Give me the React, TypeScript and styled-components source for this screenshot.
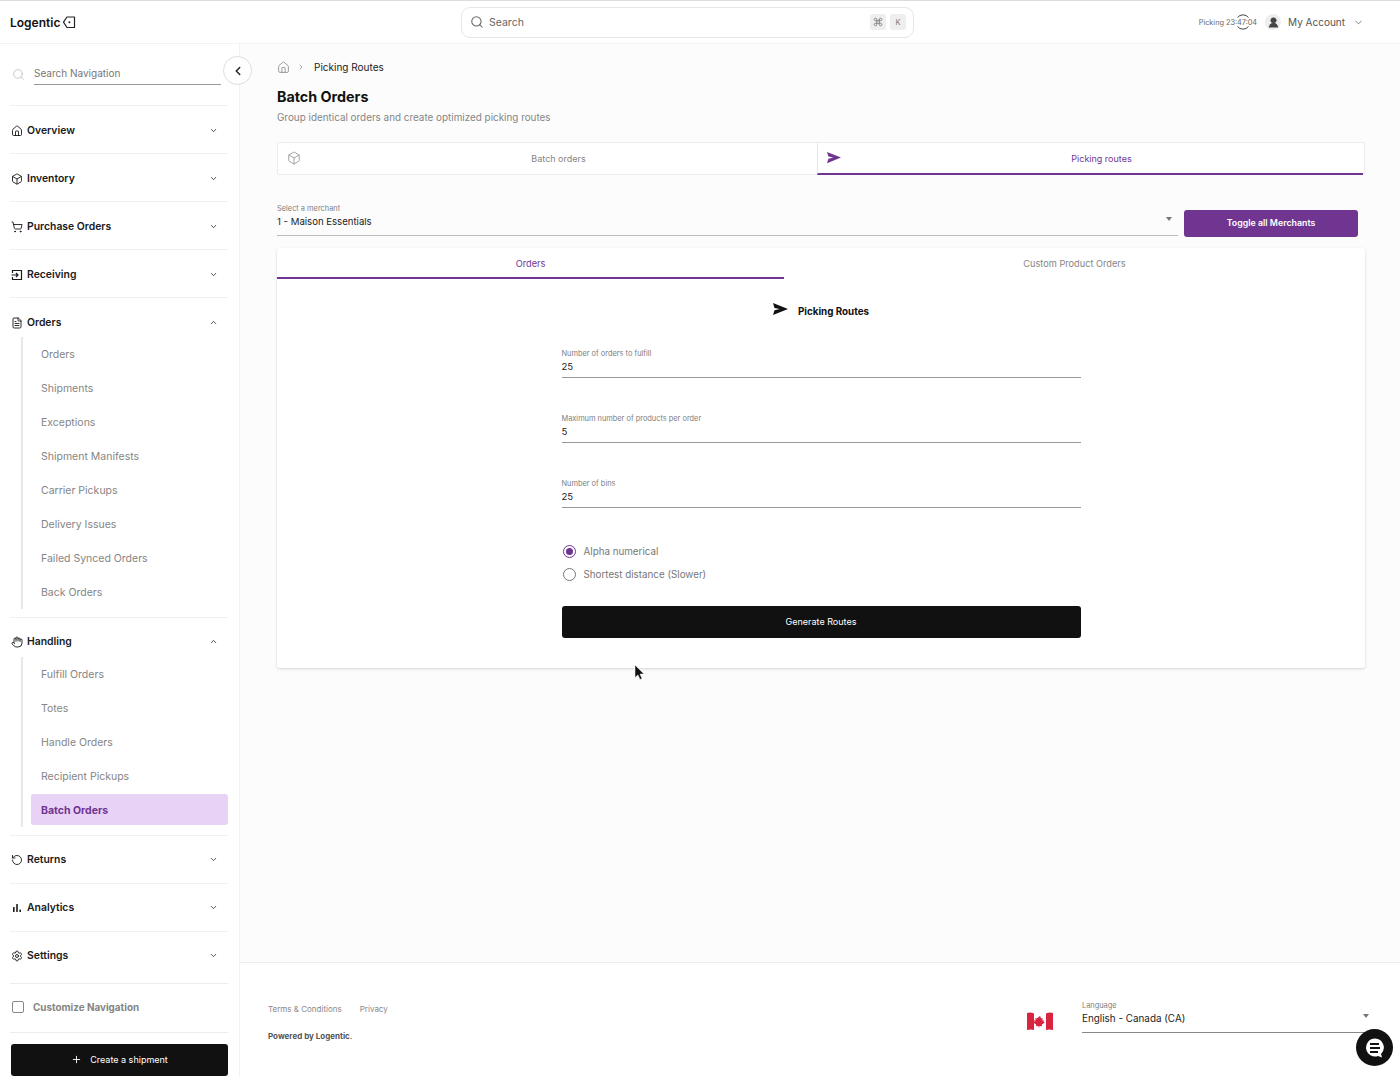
import React from "react";
import styled, { createGlobalStyle } from "styled-components";
import {
  Box,
  ChevronDown,
  ChevronLeft,
  ChevronRight,
  ChevronUp,
  Command,
  FileText,
  Hand,
  Home,
  Plus,
  RotateCcw,
  Search,
  Settings,
  ShoppingCart,
  UserRound,
} from "lucide-react";

const purple = "#6f3590";
const font = `"Inter", "Liberation Sans", sans-serif`;

const GlobalStyle = createGlobalStyle`
  html, body { margin: 0; padding: 0; background: #fcfcfc; }
  * { box-sizing: border-box; }
  body { font-family: ${font}; color: #111; -webkit-font-smoothing: antialiased; }
`;

const Page = styled.div`
  position: relative;
  display: flex;
  flex-direction: column;
  width: 1400px;
  height: 1077px;
  overflow: hidden;
  border-top: 1px solid #dcdcdc;
`;

const Header = styled.header`
  display: grid;
  grid-template-columns: 461px 453px 1fr;
  height: 43px;
  flex: none;
  background: #fff;
  border-bottom: 1px solid #f2f2f2;
`;

const Logo = styled.div`
  display: flex;
  align-items: center;
  gap: 2px;
  padding-left: 10px;
  font-size: 12px;
  font-weight: 600;
`;

const TopSearch = styled.div`
  display: flex;
  align-items: center;
  gap: 5px;
  height: 31px;
  margin-top: 6px;
  padding: 0 7px 1px 8px;
  border: 1px solid #e6e6e6;
  border-radius: 9px;
  color: #666;
  font-size: 10.5px;
`;

const TopSearchText = styled.span`
  flex: 1;
`;

const Kbd = styled.span`
  display: flex;
  align-items: center;
  justify-content: center;
  width: 16px;
  height: 16px;
  margin-left: -1px;
  border-radius: 3px;
  background: #eee;
  color: #777;
  font-size: 7.5px;
`;

const TopRight = styled.div`
  display: flex;
  align-items: center;
  justify-content: flex-end;
  padding-right: 36px;
  color: #555;
`;

const Timer = styled.span`
  position: relative;
  font-size: 7.3px;
  color: #666;
  margin-right: 8px;
`;

const TimerArcs = styled.svg`
  position: absolute;
  top: -5px;
  right: 6px;
  width: 16px;
  height: 18px;
`;

const Avatar = styled.span`
  display: flex;
  align-items: center;
  justify-content: center;
  width: 16px;
  height: 16px;
  border-radius: 50%;
  background: #eee;
  color: #444;
  margin-right: 7px;
`;

const Account = styled.span`
  font-size: 10px;
  margin-right: 8px;
`;

const Body = styled.div`
  display: flex;
  flex: 1;
  min-height: 0;
`;

const Sidebar = styled.aside`
  position: relative;
  display: flex;
  flex-direction: column;
  flex: none;
  width: 240px;
  padding: 0 11px 0 10px;
  background: #fff;
  border-right: 1px solid #f2f2f2;
`;

const NavSearch = styled.div`
  display: flex;
  align-items: center;
  gap: 9px;
  height: 61px;
  padding: 0 7px 0 2px;
  color: #bbb;
`;

const NavSearchText = styled.div`
  flex: 1;
  height: 21px;
  padding-top: 3px;
  border-bottom: 1px solid #999;
  color: #777;
  font-size: 10px;
`;

const Collapse = styled.button`
  position: absolute;
  top: 12px;
  left: 223px;
  display: flex;
  align-items: center;
  justify-content: center;
  width: 29px;
  height: 29px;
  padding: 0;
  border: 1px solid #ddd;
  border-radius: 50%;
  background: #fff;
  color: #222;
`;

const Section = styled.section`
  border-top: 1px solid #f0f0f0;
`;

const SectionHead = styled.div<{ $raised?: boolean }>`
  display: flex;
  align-items: center;
  gap: 4px;
  height: 47px;
  padding: ${(p) => (p.$raised ? "0" : "2px")} 10px 0 1px;
  font-size: 10.4px;
  font-weight: 600;
  color: #1a1a1a;
`;

const SectionTitle = styled.span`
  flex: 1;
`;

const SubList = styled.div`
  display: flex;
  flex-direction: column;
  margin: -8px 0 8px 11px;
  padding-left: 8px;
  border-left: 2px solid #e8e8e8;
`;

const SubItem = styled.div<{ $active?: boolean }>`
  display: flex;
  align-items: center;
  height: ${(p) => (p.$active ? "31px" : "34px")};
  margin-top: ${(p) => (p.$active ? "1px" : "0")};
  margin-bottom: ${(p) => (p.$active ? "2px" : "0")};
  padding: ${(p) => (p.$active ? "1px" : "0")} 0 0 10px;
  border-radius: 3px;
  background: ${(p) => (p.$active ? "#e8d2f5" : "transparent")};
  color: ${(p) => (p.$active ? purple : "#858585")};
  font-size: 10.5px;
  font-weight: ${(p) => (p.$active ? 700 : 400)};
`;

const Customize = styled.div`
  display: flex;
  align-items: center;
  gap: 9px;
  height: 50px;
  margin-top: 4px;
  padding: 0 0 2px 2px;
  border-top: 1px solid #ececec;
  border-bottom: 1px solid #ececec;
  color: #858585;
  font-size: 9.9px;
  font-weight: 700;
`;

const CheckBoxMark = styled.span`
  width: 12px;
  height: 12px;
  border: 1.5px solid #888;
  border-radius: 2px;
`;

const ShipButton = styled.button`
  display: flex;
  align-items: center;
  justify-content: center;
  gap: 8px;
  width: 217px;
  height: 32px;
  margin: 11px 0 0 1px;
  padding-bottom: 2px;
  border: 0;
  border-radius: 3px;
  background: #111;
  color: #fff;
  font-family: inherit;
  font-size: 9px;
`;

const Main = styled.main`
  display: flex;
  flex-direction: column;
  flex: 1;
  min-width: 0;
`;

const Content = styled.div`
  flex: 1;
  padding: 15px 35px 0 37px;
  background: #fcfcfc;
`;

const Crumbs = styled.div`
  display: flex;
  align-items: center;
  gap: 7px;
  height: 16px;
  color: #777;
  font-size: 10px;
`;

const CrumbCurrent = styled.span`
  margin-left: 2px;
  color: #222;
`;

const Title = styled.h1`
  margin: 12px 0 0;
  font-size: 14.3px;
  line-height: 20px;
  font-weight: 700;
`;

const Subtitle = styled.p`
  margin: 3px 0 0;
  color: #858585;
  font-size: 9.9px;
  line-height: 15px;
`;

const TopTabs = styled.div`
  display: flex;
  height: 33px;
  margin-top: 17px;
  background: #fff;
  border: 1px solid #ececec;
  border-radius: 2px;
`;

const TopTab = styled.div<{ $active?: boolean; $width: string }>`
  position: relative;
  display: flex;
  align-items: center;
  justify-content: center;
  width: ${(p) => p.$width};
  height: 32px;
  padding-left: 22px;
  color: ${(p) => (p.$active ? purple : "#858585")};
  font-size: 9px;
  border-left: ${(p) => (p.$active ? "1px solid #e6e6e6" : "0")};
  border-bottom: 2px solid ${(p) => (p.$active ? purple : "transparent")};
`;

const TabIcon = styled.span`
  position: absolute;
  top: 8px;
  left: 9px;
  display: flex;
  align-items: center;
  height: 14px;
  color: #888;
`;

const MerchantRow = styled.div`
  display: flex;
  align-items: flex-end;
  gap: 6px;
  margin-top: 29px;
  padding-right: 7px;
`;

const SelectField = styled.div`
  position: relative;
  flex: 1;
  padding-bottom: 7px;
  border-bottom: 1px solid #bbb;
`;

const FieldLabel = styled.div`
  color: #808080;
  font-size: 7.4px;
  line-height: 10px;
`;

const FieldValue = styled.div`
  margin-top: 1px;
  color: #222;
  font-size: 9.6px;
  line-height: 13px;
`;

const LanguageValue = styled(FieldValue)`
  font-size: 9.9px;
`;

const Caret = styled.span`
  position: absolute;
  top: 13px;
  right: 6px;
  border-left: 3.5px solid transparent;
  border-right: 3.5px solid transparent;
  border-top: 4px solid #777;
`;

const LanguageCaret = styled(Caret)`
  right: 1px;
`;

const PurpleButton = styled.button`
  width: 174px;
  height: 27px;
  margin-bottom: -1px;
  padding-bottom: 3px;
  border: 0;
  border-radius: 3px;
  background: ${purple};
  color: #fff;
  font-family: inherit;
  font-size: 8.8px;
  font-weight: 600;
`;

const Card = styled.div`
  height: 420px;
  margin-top: 12px;
  background: #fff;
  border-radius: 3px;
  box-shadow: 0 1px 3px rgba(0, 0, 0, 0.16);
`;

const InnerTabs = styled.div`
  display: flex;
  height: 31px;
`;

const InnerTab = styled.div<{ $active?: boolean; $width: string }>`
  display: flex;
  align-items: center;
  justify-content: center;
  width: ${(p) => p.$width};
  padding-top: 1px;
  color: ${(p) => (p.$active ? purple : "#858585")};
  font-size: 9.2px;
  border-bottom: 2px solid ${(p) => (p.$active ? purple : "transparent")};
`;

const Form = styled.div`
  display: flex;
  flex-direction: column;
  width: 519px;
  margin: 0 auto;
`;

const FormTitle = styled.div`
  display: flex;
  align-items: center;
  justify-content: center;
  gap: 10px;
  height: 18px;
  margin-top: 23px;
  font-size: 9.8px;
  font-weight: 700;
`;

const FormTitleIcon = styled.span`
  display: flex;
  margin-bottom: 4px;
`;

const Field = styled.div`
  height: 29px;
  margin-top: 36px;
  border-bottom: 1px solid #999;
  &:first-of-type {
    margin-top: 0;
  }
`;

const Fields = styled.div`
  display: flex;
  flex-direction: column;
  margin-top: 29px;
`;

const Radios = styled.div`
  display: flex;
  flex-direction: column;
  gap: 9px;
  margin-top: 36px;
  padding-left: 1px;
`;

const RadioRow = styled.label`
  display: flex;
  align-items: center;
  gap: 8px;
  height: 14px;
  color: #777;
  font-size: 9.8px;
`;

const RadioDot = styled.span<{ $on?: boolean }>`
  display: flex;
  align-items: center;
  justify-content: center;
  width: 13px;
  height: 13px;
  border: 1.5px solid ${(p) => (p.$on ? purple : "#777")};
  border-radius: 50%;
  &::after {
    content: "";
    display: ${(p) => (p.$on ? "block" : "none")};
    width: 7px;
    height: 7px;
    border-radius: 50%;
    background: ${purple};
  }
`;

const GenerateButton = styled.button`
  height: 32px;
  margin-top: 25px;
  padding-bottom: 3px;
  border: 0;
  border-radius: 3px;
  background: #111;
  color: #fff;
  font-family: inherit;
  font-size: 9px;
`;

const Footer = styled.footer`
  display: flex;
  justify-content: space-between;
  height: 115px;
  flex: none;
  padding: 40px 30px 0 28px;
  background: #fff;
  border-top: 1px solid #eee;
`;

const FooterLinks = styled.div`
  display: flex;
  gap: 18px;
  color: #888;
  font-size: 8px;
  line-height: 12px;
`;

const Powered = styled.div`
  margin-top: 15px;
  color: #555;
  font-size: 8px;
  line-height: 12px;
  font-weight: 700;
`;

const Language = styled.div`
  display: flex;
  gap: 29px;
  margin-top: -2px;
`;

const LanguageField = styled.div`
  position: relative;
  width: 288px;
  height: 32px;
  border-bottom: 1px solid #888;
`;

const FlagWrap = styled.div`
  padding-top: 11px;
`;

const ChatBubble = styled.div`
  position: absolute;
  right: 7px;
  bottom: 11px;
  display: flex;
  align-items: center;
  justify-content: center;
  width: 37px;
  height: 37px;
  border-radius: 50%;
  background: #111;
`;

const Cursor = styled.svg`
  position: absolute;
  left: 634px;
  top: 664px;
  width: 11px;
  height: 16px;
`;

const LogoTag = () => (
  <svg width="14" height="14" viewBox="0 0 14 14" fill="none" stroke="#222" strokeWidth="1.2">
    <path d="M5 2h7.500v10.500H5L1.500 7.200z" strokeLinejoin="round" />
    <circle cx="7.400" cy="7.200" r="1" fill="#222" stroke="none" />
  </svg>
);

const SendIcon = ({ color, size = 14 }: { color: string; size?: number }) => (
  <svg width={size} height={size * 0.8} viewBox="0 0 20 16" fill={color}>
    <path d="M0 0l20 8-20 8 2-6.500L9 8 2 6.500z" />
  </svg>
);

const ReceivingIcon = () => (
  <svg width="12" height="12" viewBox="0 0 12 12" fill="none" stroke="currentColor" strokeWidth="1.2">
    <path d="M1.500 4V1.500h9v9h-9V8" />
    <path d="M0.500 6h6.500M5 4l2 2-2 2" />
  </svg>
);

const AnalyticsIcon = () => (
  <svg width="12" height="12" viewBox="0 0 12 12" fill="currentColor">
    <rect x="2" y="5" width="1.600" height="5" rx="0.500" />
    <rect x="5.200" y="2" width="1.600" height="8" rx="0.500" />
    <rect x="8.400" y="7.500" width="1.600" height="2.500" rx="0.500" />
  </svg>
);

const Flag = () => (
  <svg width="26" height="19" viewBox="0 0 26 19">
    <path d="M0 1q3.500-1 7 .5V18q-3-1-7 0z" fill="#d9243f" />
    <path d="M7 1.500q6 1.500 12 0V18q-6 1.500-12 0z" fill="#fff" />
    <path d="M19 1.500Q22 0 26 1v17q-4-1-7 0z" fill="#d9243f" />
    <path d="M13 4l1.200 2.400 1.600-.5-.6 2.600 1.800-.3-.5 1.600 1.200.8-3 2.200.4 1.500-2.600-.4-.5 2.600-.5-2.600-2.600.4.4-1.500-3-2.200 1.200-.8-.5-1.600 1.800.3-.6-2.600 1.600.5z" fill="#d9243f" />
  </svg>
);

const sectionIcon = { size: 12, strokeWidth: 1.8 };

type NavSection = {
  title: string;
  icon: React.ReactNode;
  items?: string[];
  active?: string;
  raised?: boolean;
};

const sections: NavSection[] = [
  { title: "Overview", icon: <Home {...sectionIcon} /> },
  { title: "Inventory", icon: <Box {...sectionIcon} /> },
  { title: "Purchase Orders", icon: <ShoppingCart {...sectionIcon} /> },
  { title: "Receiving", icon: <ReceivingIcon /> },
  {
    title: "Orders",
    icon: <FileText {...sectionIcon} />,
    items: [
      "Orders",
      "Shipments",
      "Exceptions",
      "Shipment Manifests",
      "Carrier Pickups",
      "Delivery Issues",
      "Failed Synced Orders",
      "Back Orders",
    ],
  },
  {
    title: "Handling",
    icon: <Hand {...sectionIcon} />,
    items: ["Fulfill Orders", "Totes", "Handle Orders", "Recipient Pickups", "Batch Orders"],
    active: "Batch Orders",
    raised: true,
  },
  { title: "Returns", icon: <RotateCcw {...sectionIcon} />, raised: true },
  { title: "Analytics", icon: <AnalyticsIcon />, raised: true },
  { title: "Settings", icon: <Settings {...sectionIcon} />, raised: true },
];

const fields = [
  { label: "Number of orders to fulfill", value: "25" },
  { label: "Maximum number of products per order", value: "5" },
  { label: "Number of bins", value: "25" },
];

export default function App() {
  return (
    <Page>
      <GlobalStyle />
      <Header>
        <Logo>
          Logentic <LogoTag />
        </Logo>
        <TopSearch>
          <Search size={14} strokeWidth={1.8} />
          <TopSearchText>Search</TopSearchText>
          <Kbd>
            <Command size={10} />
          </Kbd>
          <Kbd>K</Kbd>
        </TopSearch>
        <TopRight>
          <Timer>
            Picking 23:47:04
            <TimerArcs viewBox="0 0 16 18" fill="none" stroke="#444" strokeWidth="1">
              <path d="M2.500 4.500A7 7 0 0 1 13.500 4.500" />
              <path d="M2.500 13.500A7 7 0 0 0 13.500 13.500" />
            </TimerArcs>
          </Timer>
          <Avatar>
            <UserRound size={13} fill="#444" strokeWidth={1} />
          </Avatar>
          <Account>My Account</Account>
          <ChevronDown size={11} color="#777" />
        </TopRight>
      </Header>
      <Body>
        <Sidebar>
          <NavSearch>
            <Search size={13} strokeWidth={1.5} />
            <NavSearchText>Search Navigation</NavSearchText>
          </NavSearch>
          <Collapse>
            <ChevronLeft size={14} strokeWidth={2.5} />
          </Collapse>
          {sections.map((s) => (
            <Section key={s.title}>
              <SectionHead $raised={s.raised}>
                {s.icon}
                <SectionTitle>{s.title}</SectionTitle>
                {s.items ? <ChevronUp size={9} strokeWidth={2} /> : <ChevronDown size={9} strokeWidth={2} />}
              </SectionHead>
              {s.items && (
                <SubList>
                  {s.items.map((item) => (
                    <SubItem key={item} $active={item === s.active}>
                      {item}
                    </SubItem>
                  ))}
                </SubList>
              )}
            </Section>
          ))}
          <Customize>
            <CheckBoxMark />
            Customize Navigation
          </Customize>
          <ShipButton>
            <Plus size={11} />
            Create a shipment
          </ShipButton>
        </Sidebar>
        <Main>
          <Content>
            <Crumbs>
              <Home size={13} strokeWidth={1.3} />
              <ChevronRight size={8} />
              <CrumbCurrent>Picking Routes</CrumbCurrent>
            </Crumbs>
            <Title>Batch Orders</Title>
            <Subtitle>Group identical orders and create optimized picking routes</Subtitle>
            <TopTabs>
              <TopTab $width="539px">
                <TabIcon>
                  <Box size={14} strokeWidth={1.3} />
                </TabIcon>
                Batch orders
              </TopTab>
              <TopTab $active $width="546px">
                <TabIcon>
                  <SendIcon color={purple} />
                </TabIcon>
                Picking routes
              </TopTab>
            </TopTabs>
            <MerchantRow>
              <SelectField>
                <FieldLabel>Select a merchant</FieldLabel>
                <FieldValue>1 - Maison Essentials</FieldValue>
                <Caret />
              </SelectField>
              <PurpleButton>Toggle all Merchants</PurpleButton>
            </MerchantRow>
            <Card>
              <InnerTabs>
                <InnerTab $active $width="507px">
                  Orders
                </InnerTab>
                <InnerTab $width="581px">Custom Product Orders</InnerTab>
              </InnerTabs>
              <Form>
                <FormTitle>
                  <FormTitleIcon>
                    <SendIcon color="#111" size={15} />
                  </FormTitleIcon>
                  Picking Routes
                </FormTitle>
                <Fields>
                  {fields.map((f) => (
                    <Field key={f.label}>
                      <FieldLabel>{f.label}</FieldLabel>
                      <FieldValue>{f.value}</FieldValue>
                    </Field>
                  ))}
                </Fields>
                <Radios>
                  <RadioRow>
                    <RadioDot $on />
                    Alpha numerical
                  </RadioRow>
                  <RadioRow>
                    <RadioDot />
                    Shortest distance (Slower)
                  </RadioRow>
                </Radios>
                <GenerateButton>Generate Routes</GenerateButton>
              </Form>
            </Card>
          </Content>
          <Footer>
            <div>
              <FooterLinks>
                <span>Terms &amp; Conditions</span>
                <span>Privacy</span>
              </FooterLinks>
              <Powered>Powered by Logentic.</Powered>
            </div>
            <Language>
              <FlagWrap>
                <Flag />
              </FlagWrap>
              <LanguageField>
                <FieldLabel>Language</FieldLabel>
                <LanguageValue>English - Canada (CA)</LanguageValue>
                <LanguageCaret />
              </LanguageField>
            </Language>
          </Footer>
        </Main>
      </Body>
      <ChatBubble>
        <svg width="22" height="22" viewBox="0 0 22 22">
          <path d="M11 1.500a9 9 0 1 0 3 17.500l4 1.500-1-3.500A9 9 0 0 0 11 1.500z" fill="#fff" />
          <path d="M6 7h9M6 11h10M6 15h8" stroke="#111" strokeWidth="2" />
        </svg>
      </ChatBubble>
      <Cursor viewBox="0 0 11 16">
        <path d="M1 0v12.500l3-2.600 2 4.600 2-.9-2-4.500h4z" fill="#111" stroke="#fff" strokeWidth="0.5" />
      </Cursor>
    </Page>
  );
}
